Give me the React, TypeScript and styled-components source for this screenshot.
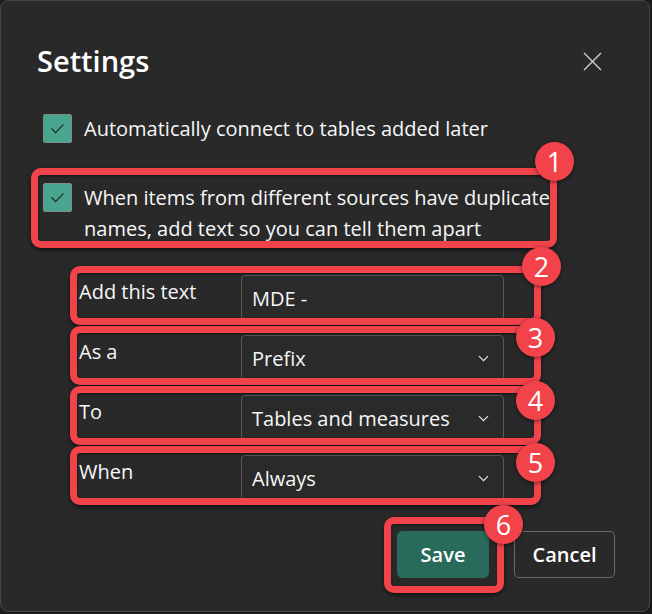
import React, { FC } from 'react';
import styled, { createGlobalStyle } from 'styled-components';

const GlobalStyle = createGlobalStyle`
  html, body {
    margin: 0;
    padding: 0;
    background: #1b1b1b;
  }
  body {
    font-family: "Open Sans", "Noto Sans", sans-serif;
    color: #f7f7f7;
  }
`;

const Dialog = styled.div`
  width: 650px;
  height: 612px;
  box-sizing: border-box;
  background: #292929;
  border: 1px solid #464646;
  border-radius: 8px;
  padding: 40px 34px 33px 36px;
  display: flex;
  flex-direction: column;
`;

const Header = styled.div`
  display: flex;
  align-items: center;
  justify-content: space-between;
`;

const Title = styled.h1`
  margin: 0;
  font-size: 29px;
  font-weight: 600;
  line-height: 40px;
  color: #ffffff;
`;

const CloseButton = styled.button`
  width: 20px;
  height: 20px;
  padding: 0;
  margin-right: 13px;
  border: none;
  background: none;
  display: flex;
  align-items: center;
  justify-content: center;
`;

const CheckRow = styled.div<{ $gap: number }>`
  position: relative;
  display: flex;
  align-items: flex-start;
  gap: 12px;
  width: fit-content;
  margin-left: 6px;
  margin-top: ${({ $gap }) => $gap}px;
`;

const Box = styled.span`
  flex: none;
  width: 29px;
  height: 29px;
  margin-top: 1px;
  box-sizing: border-box;
  background: #4aa58e;
  border: 1px solid #7e8e8a;
  border-radius: 2px;
  display: flex;
  align-items: center;
  justify-content: center;
`;

const CheckLabel = styled.span`
  font-size: 20px;
  line-height: 31px;
  max-width: 470px;
`;

const Form = styled.div`
  display: flex;
  flex-direction: column;
  gap: 14px;
  width: 425px;
  margin: 31px 0 0 42px;
`;

const FieldRow = styled.div`
  position: relative;
  display: grid;
  grid-template-columns: 162px 263px;
  height: 46px;
`;

const FieldLabel = styled.span`
  font-size: 20px;
  line-height: 31px;
  padding-top: 1px;
`;

const Field = styled.div`
  height: 46px;
  box-sizing: border-box;
  border: 1px solid #595959;
  border-radius: 4px;
  background: #2a2a2a;
  padding: 0 14px 0 10px;
  display: flex;
  align-items: center;
  justify-content: space-between;
  font-size: 20px;
`;

const Callout = styled.span<{ $inset: string }>`
  position: absolute;
  inset: ${({ $inset }) => $inset};
  border: 7px solid #f2434b;
  border-radius: 10px;
  box-shadow: 0 2px 4px rgba(0, 0, 0, 0.6), inset 0 1px 3px rgba(0, 0, 0, 0.5);
  pointer-events: none;
  z-index: 1;
`;

const Badge = styled.span<{ $top: number; $right: number }>`
  position: absolute;
  top: ${({ $top }) => $top}px;
  right: ${({ $right }) => $right}px;
  width: 39px;
  height: 39px;
  border-radius: 50%;
  background: #f2434b;
  color: #ffffff;
  font-size: 27px;
  line-height: 39px;
  text-align: center;
  box-shadow: 0 1px 4px rgba(0, 0, 0, 0.55);
  z-index: 2;
`;

const Footer = styled.div`
  display: flex;
  justify-content: flex-end;
  gap: 25px;
  margin-top: 30px;
`;

const ButtonWrap = styled.div`
  position: relative;
  display: flex;
`;

const Button = styled.button<{ $primary?: boolean }>`
  height: 47px;
  width: ${({ $primary }) => ($primary ? 92 : 101)}px;
  box-sizing: border-box;
  border-radius: 5px;
  border: 1px solid ${({ $primary }) => ($primary ? '#286b5b' : '#6a6a6a')};
  background: ${({ $primary }) => ($primary ? '#286b5b' : 'transparent')};
  color: #ffffff;
  font-family: inherit;
  font-size: 20px;
  font-weight: 600;
`;

const Check: FC = () => (
  <svg width="29" height="29" viewBox="0 0 29 29">
    <path d="M8 14.5 L12.5 19 L21 10" fill="none" stroke="#1c2d29" strokeWidth="1.3" />
  </svg>
);

const Chevron: FC = () => (
  <svg width="11" height="7" viewBox="0 0 11 7">
    <path d="M1 1.2 L5.5 5.7 L10 1.2" fill="none" stroke="#e6e6e6" strokeWidth="1.2" />
  </svg>
);

interface FieldProps {
  label: string;
  value: string;
  num: number;
  badgeTop: number;
  badgeRight: number;
  select?: boolean;
}

const FormField: FC<FieldProps> = ({ label, value, num, badgeTop, badgeRight, select }) => (
  <FieldRow>
    <FieldLabel>{label}</FieldLabel>
    <Field>
      {value}
      {select && <Chevron />}
    </Field>
    <Callout $inset="-9px -37px -4px -9px" />
    <Badge $top={badgeTop} $right={badgeRight}>{num}</Badge>
  </FieldRow>
);

const App: FC = () => (
  <>
    <GlobalStyle />
    <Dialog>
      <Header>
        <Title>Settings</Title>
        <CloseButton aria-label="Close">
          <svg width="19" height="19" viewBox="0 0 19 19">
            <path d="M1 1 L18 18 M18 1 L1 18" stroke="#cfcfcf" strokeWidth="1.4" />
          </svg>
        </CloseButton>
      </Header>

      <CheckRow $gap={32}>
        <Box><Check /></Box>
        <CheckLabel>Automatically connect to tables added later</CheckLabel>
      </CheckRow>

      <CheckRow $gap={38}>
        <Box><Check /></Box>
        <CheckLabel>
          When items from different sources have duplicate names, add text so you can tell them apart
        </CheckLabel>
        <Callout $inset="-14px -3px -4px -12px" />
        <Badge $top={-40} $right={-20}>1</Badge>
      </CheckRow>

      <Form>
        <FormField label="Add this text" value="MDE -" num={2} badgeTop={-28} badgeRight={-57} />
        <FormField label="As a" value="Prefix" num={3} badgeTop={-17} badgeRight={-51} select />
        <FormField label="To" value="Tables and measures" num={4} badgeTop={-14} badgeRight={-51} select />
        <FormField label="When" value="Always" num={5} badgeTop={-12} badgeRight={-51} select />
      </Form>

      <Footer>
        <ButtonWrap>
          <Button $primary>Save</Button>
          <Callout $inset="-14px -15px -15px -13px" />
          <Badge $top={-26} $right={-34}>6</Badge>
        </ButtonWrap>
        <Button>Cancel</Button>
      </Footer>
    </Dialog>
  </>
);

export default App;
